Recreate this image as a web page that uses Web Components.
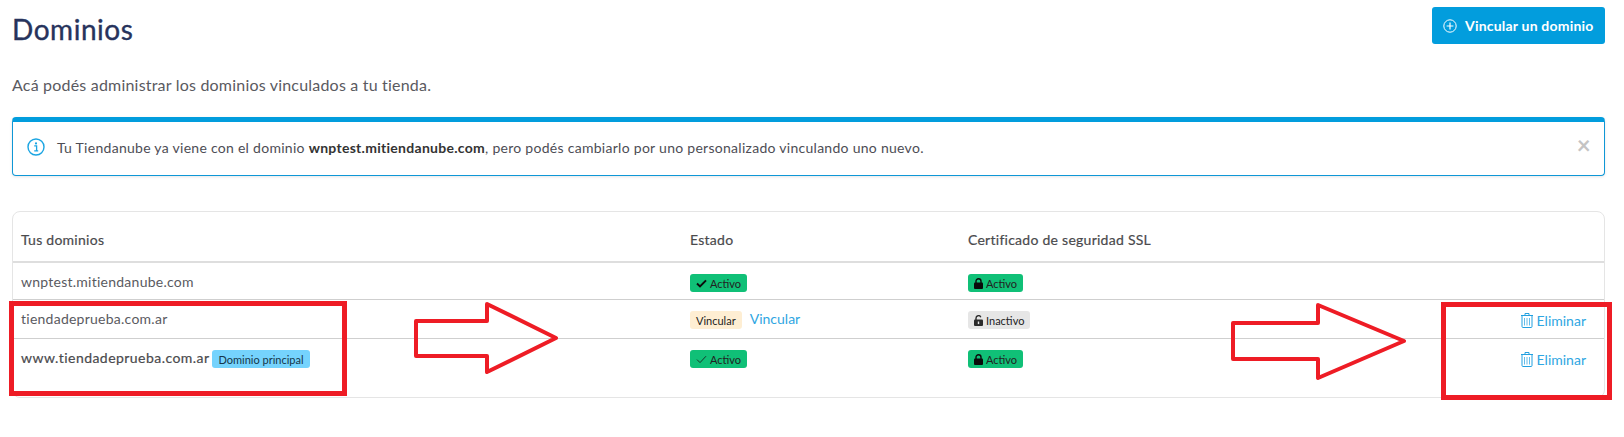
<!DOCTYPE html>
<html lang="es">
<head>
<meta charset="utf-8">
<title>Dominios</title>
<style>
  html, body { margin: 0; background: #fff; }
  body { position: relative; width: 1624px; height: 437px; overflow: hidden; font-family: 'Lato', 'Liberation Sans', sans-serif; color: #4a4a4f; }
</style>
</head>
<body>
  <dominios-page></dominios-page>
  <notas-flechas></notas-flechas>

<script>
  const ICONOS = {
    check: '<svg width="11" height="9" viewBox="0 0 11 9"><path d="M1 4.6 4 7.4 10 1.4" fill="none" stroke="#0c0c0c" stroke-width="2"/></svg>',
    checkFino: '<svg width="11" height="9" viewBox="0 0 11 9"><path d="M1 4.6 4 7.6 10 1.2" fill="none" stroke="#17352a" stroke-width="1"/></svg>',
    lock: '<svg width="9" height="11" viewBox="0 0 9 11"><path d="M2 5V3.2a2.5 2.5 0 0 1 5 0V5" fill="none" stroke="#0a0a0a" stroke-width="1.4"/><rect x="0" y="4.6" width="9" height="6.4" rx="1" fill="#0a0a0a"/></svg>',
    unlock: '<svg width="9" height="11" viewBox="0 0 9 11"><path d="M2 5V3.2a2.5 2.5 0 0 1 4.8-1" fill="none" stroke="#2b2b2b" stroke-width="1.4"/><rect x="0" y="4.6" width="9" height="6.4" rx="1" fill="#2b2b2b"/><rect x="3.8" y="6.5" width="1.4" height="2.6" fill="#e6e6e6"/></svg>',
    trash: '<svg width="12" height="15" viewBox="0 0 12 15"><g fill="none" stroke="#22a0e0"><path d="M0 2.5h12M4 2.5V.5h4v2"/><path d="M1 2.5v11a1 1 0 0 0 1 1h8a1 1 0 0 0 1-1v-11"/><path d="M3.5 5v7.5M6 5v7.5M8.5 5v7.5" stroke-opacity=".7"/></g></svg>',
    plus: '<svg width="14" height="14" viewBox="0 0 14 14"><g fill="none" stroke="#fff"><circle cx="7" cy="7" r="6.2"/><path d="M7 3.6v6.8M3.6 7h6.8" stroke-width="1.2"/></g></svg>',
    info: '<svg width="18" height="18" viewBox="0 0 18 18"><circle cx="9" cy="9" r="8" fill="none" stroke="#1ba5e2" stroke-width="1.4"/><circle cx="9" cy="5.4" r="1.1" fill="#1ba5e2"/><path d="M7.2 7.8H9.6V12.6M7.2 12.9H11.2" fill="none" stroke="#1ba5e2" stroke-width="1.3"/></svg>'
  };

  /* <estado-badge tipo="ok|aviso|inactivo|info" icono="check|lock|...">texto</estado-badge> */
  class EstadoBadge extends HTMLElement {
    constructor() {
      super();
      this.attachShadow({ mode: 'open' });
    }

    connectedCallback() {
      const icono = ICONOS[this.getAttribute('icono')] || '';
      this.shadowRoot.innerHTML = `
        <style>
          :host { display: inline-flex; align-items: center; gap: 3px; height: 18px; padding: 0 6px; border-radius: 3px; font-size: 11px; font-weight: 400; letter-spacing: 0; -webkit-text-stroke: 0; color: #222; white-space: nowrap; background: #e6e6e6; }
          :host([tipo="ok"]) { background: #10c077; }
          :host([tipo="aviso"]) { background: #feeed3; }
          :host([tipo="info"]) { background: #75d3fd; color: #16364a; }
          svg { display: block; }
        </style>
        ${icono}<slot></slot>
      `;
    }
  }
  customElements.define('estado-badge', EstadoBadge);

  class BarraTitulo extends HTMLElement {
    constructor() {
      super();
      this.attachShadow({ mode: 'open' });
    }

    connectedCallback() {
      this.shadowRoot.innerHTML = `
        <style>
          :host { display: flex; justify-content: space-between; align-items: flex-start; }
          h1 { margin: 8px 0 0; font-size: 28px; line-height: 28px; font-weight: 400; letter-spacing: .55px; -webkit-text-stroke: .35px #27335c; color: #27335c; }
          button { display: flex; align-items: center; gap: 8px; height: 37px; width: 173px; padding: 0 0 0 11px; box-sizing: border-box; border: none; border-radius: 3px; background: #029ddd; color: #fff; font: 700 14px 'Lato', sans-serif; letter-spacing: .2px; }
          svg { display: block; }
        </style>
        <h1><slot></slot></h1>
        <button type="button">${ICONOS.plus}Vincular un dominio</button>
      `;
    }
  }
  customElements.define('barra-titulo', BarraTitulo);

  class AvisoInfo extends HTMLElement {
    constructor() {
      super();
      this.attachShadow({ mode: 'open' });
    }

    connectedCallback() {
      this.shadowRoot.innerHTML = `
        <style>
          :host { display: flex; align-items: center; gap: 12px; height: 59px; box-sizing: border-box; padding: 0 13px 2px 14px; border: 1px solid #0f97d6; border-top: 5px solid #029ddd; border-radius: 4px; box-shadow: 0 1px 3px rgba(0,0,0,.1); font-size: 14px; letter-spacing: .28px; color: #4d4d55; }
          .txt { flex: 1; }
          ::slotted(b) { color: #333; }
          .cerrar { color: #c4c4c4; font-size: 24px; font-weight: 700; line-height: 1; margin-top: -6px; }
          svg { display: block; margin-top: -2px; }
        </style>
        ${ICONOS.info}
        <div class="txt"><slot></slot></div>
        <span class="cerrar">×</span>
      `;
    }
  }
  customElements.define('aviso-info', AvisoInfo);

  /* Fila de la tabla. Slots: dominio, estado, ssl, accion. alto = altura en px */
  class DominioFila extends HTMLElement {
    constructor() {
      super();
      this.attachShadow({ mode: 'open' });
    }

    connectedCallback() {
      this.shadowRoot.innerHTML = `
        <style>
          :host { display: grid; grid-template-columns: 669px 278px 1fr auto; height: ${this.getAttribute('alto') || 38}px; box-sizing: border-box; border-bottom: 1px solid #cfcfcf; font-size: 14px; line-height: 15px; letter-spacing: .25px; color: #5a5a5f; }
          :host([cabecera]) { padding-top: 5px; border-bottom: 2px solid #dedede; letter-spacing: .26px; -webkit-text-stroke: .2px #4a4a4d; color: #4a4a4d; align-items: center; }
          :host([ultima]) { border-bottom: none; }
          .c { padding: 11px 8px 0; display: flex; align-items: flex-start; gap: 8px; }
          :host([cabecera]) .c { padding-top: 0; }
          .a { padding: 13px 18px 0 0; }
        </style>
        <div class="c"><slot name="dominio"></slot></div>
        <div class="c"><slot name="estado"></slot></div>
        <div class="c"><slot name="ssl"></slot></div>
        <div class="a"><slot name="accion"></slot></div>
      `;
    }
  }
  customElements.define('dominio-fila', DominioFila);

  class EliminarLink extends HTMLElement {
    constructor() {
      super();
      this.attachShadow({ mode: 'open' });
    }

    connectedCallback() {
      this.shadowRoot.innerHTML = `
        <style>
          :host { display: flex; align-items: center; gap: 4px; font-size: 14px; letter-spacing: 0; color: #2fa6e2; }
          svg { display: block; }
        </style>
        ${ICONOS.trash}<span>Eliminar</span>
      `;
    }
  }
  customElements.define('eliminar-link', EliminarLink);

  class DominiosPage extends HTMLElement {
    constructor() {
      super();
      this.attachShadow({ mode: 'open' });
    }

    connectedCallback() {
      this.shadowRoot.innerHTML = `
        <style>
          :host { display: block; padding: 7px 19px 0 12px; }
          p { margin: 29px 0 0; height: 24px; line-height: 24px; font-size: 16px; letter-spacing: .2px; color: #5a5a5f; }
          aviso-info { margin-top: 20px; }
          .tabla { margin-top: 35px; height: 187px; box-sizing: border-box; border: 1px solid #e5e5e5; border-radius: 8px; }
          .link { font-size: 14px; letter-spacing: 0; color: #2fa6e2; }
          .fuerte { display: flex; align-items: flex-start; gap: 3px; letter-spacing: .45px; -webkit-text-stroke: .2px #4a4a4d; color: #4a4a4d; white-space: nowrap; }
        </style>
        <barra-titulo>Dominios</barra-titulo>
        <p>Acá podés administrar los dominios vinculados a tu tienda.</p>
        <aviso-info>Tu Tiendanube ya viene con el dominio <b>wnptest.mitiendanube.com</b>, pero podés cambiarlo por uno personalizado vinculando uno nuevo.</aviso-info>
        <div class="tabla">
          <dominio-fila cabecera alto="51">
            <span slot="dominio">Tus dominios</span>
            <span slot="estado">Estado</span>
            <span slot="ssl">Certificado de seguridad SSL</span>
          </dominio-fila>
          <dominio-fila alto="37">
            <span slot="dominio">wnptest.mitiendanube.com</span>
            <estado-badge slot="estado" tipo="ok" icono="check">Activo</estado-badge>
            <estado-badge slot="ssl" tipo="ok" icono="lock">Activo</estado-badge>
          </dominio-fila>
          <dominio-fila alto="39">
            <span slot="dominio">tiendadeprueba.com.ar</span>
            <estado-badge slot="estado" tipo="aviso">Vincular</estado-badge>
            <span slot="estado" class="link">Vincular</span>
            <estado-badge slot="ssl" tipo="inactivo" icono="unlock">Inactivo</estado-badge>
            <eliminar-link slot="accion"></eliminar-link>
          </dominio-fila>
          <dominio-fila alto="58" ultima>
            <span slot="dominio" class="fuerte">www.tiendadeprueba.com.ar <estado-badge tipo="info">Dominio principal</estado-badge></span>
            <estado-badge slot="estado" tipo="ok" icono="checkFino">Activo</estado-badge>
            <estado-badge slot="ssl" tipo="ok" icono="lock">Activo</estado-badge>
            <eliminar-link slot="accion"></eliminar-link>
          </dominio-fila>
        </div>
      `;
    }
  }
  customElements.define('dominios-page', DominiosPage);

  /* Marcas rojas puestas encima de la captura */
  class NotasFlechas extends HTMLElement {
    constructor() {
      super();
      this.attachShadow({ mode: 'open' });
    }

    connectedCallback() {
      this.shadowRoot.innerHTML = `
        <style>
          :host { position: absolute; left: 0; top: 0; width: 1624px; height: 437px; pointer-events: none; }
          svg { display: block; }
        </style>
        <svg width="1624" height="437" viewBox="0 0 1624 437" fill="none" stroke="#ee1c25">
          <rect x="11.5" y="303.5" width="333" height="90" stroke-width="5"/>
          <rect x="1443.5" y="304.5" width="166" height="93" stroke-width="5"/>
          <path d="M416 321H487V304L556 338 487 372V356H416Z" stroke-width="4" stroke-linejoin="round"/>
          <path d="M1233 323H1318V305L1404 341 1318 378V359H1233Z" stroke-width="4" stroke-linejoin="round"/>
        </svg>
      `;
    }
  }
  customElements.define('notas-flechas', NotasFlechas);
</script>
</body>
</html>
